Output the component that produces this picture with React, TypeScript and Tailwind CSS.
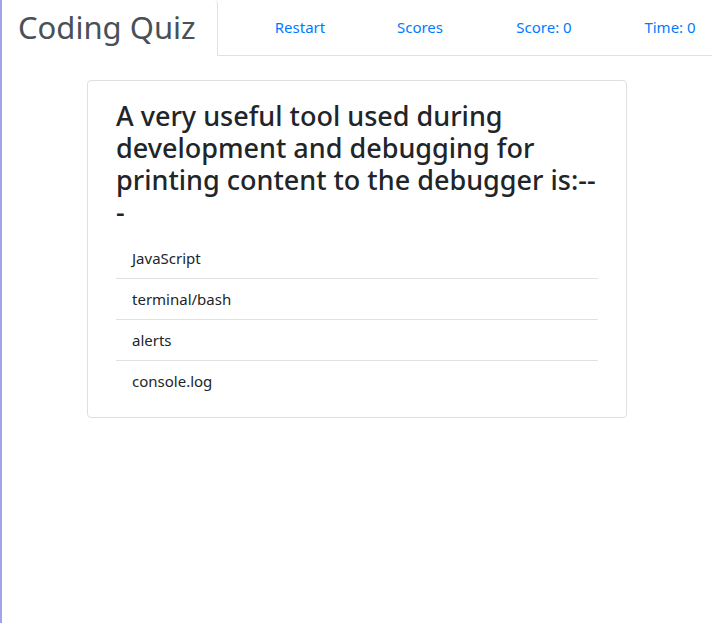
const answers = ["JavaScript", "terminal/bash", "alerts", "console.log"];

const links = [
  { label: "Restart", width: "w-[120px]" },
  { label: "Scores", width: "w-[120px]" },
  { label: "Score: 0", width: "w-[128px]" },
  { label: "Time: 0", width: "w-[124px]" },
];

const App = () => {
  return (
    <div
      className="min-h-[623px] border-l-2 border-[#a3a3ea] bg-white text-[#212529]"
      style={{ fontFamily: '"Segoe UI", "Noto Sans", sans-serif' }}
    >
      <nav className="flex h-[56px] items-stretch">
        <div className="flex w-[216px] shrink-0 items-center whitespace-nowrap rounded-tr-[4px] border-r border-[#dee2e6] bg-white pb-[2px] pl-[16px] text-[31px] leading-none text-[#495057]">
          Coding Quiz
        </div>
        <ul className="flex flex-1 items-center border-b border-[#dee2e6] pl-[22px]">
          {links.map((link) => (
            <li key={link.label} className={link.width}>
              <a
                href="#"
                className="block whitespace-nowrap pb-[1px] text-center text-[15px] text-[#007bff]"
              >
                {link.label}
              </a>
            </li>
          ))}
        </ul>
      </nav>
      <div className="mx-auto mt-[24px] w-[540px] rounded-[4px] border border-[#dfdfdf] px-[28px] pb-[16px] pt-[19px]">
        <h3 className="mb-[10px] text-[27px] font-medium leading-[32px] text-[#212529]">
          A very useful tool used during development and debugging for printing content to the debugger is:---
        </h3>
        <ul>
          {answers.map((answer, i) => (
            <li
              key={answer}
              className={`px-[16px] py-[8px] text-[15px] leading-[24px] ${
                i < answers.length - 1 ? "border-b border-[#dee2e6]" : ""
              }`}
            >
              {answer}
            </li>
          ))}
        </ul>
      </div>
    </div>
  );
};

export default App;
